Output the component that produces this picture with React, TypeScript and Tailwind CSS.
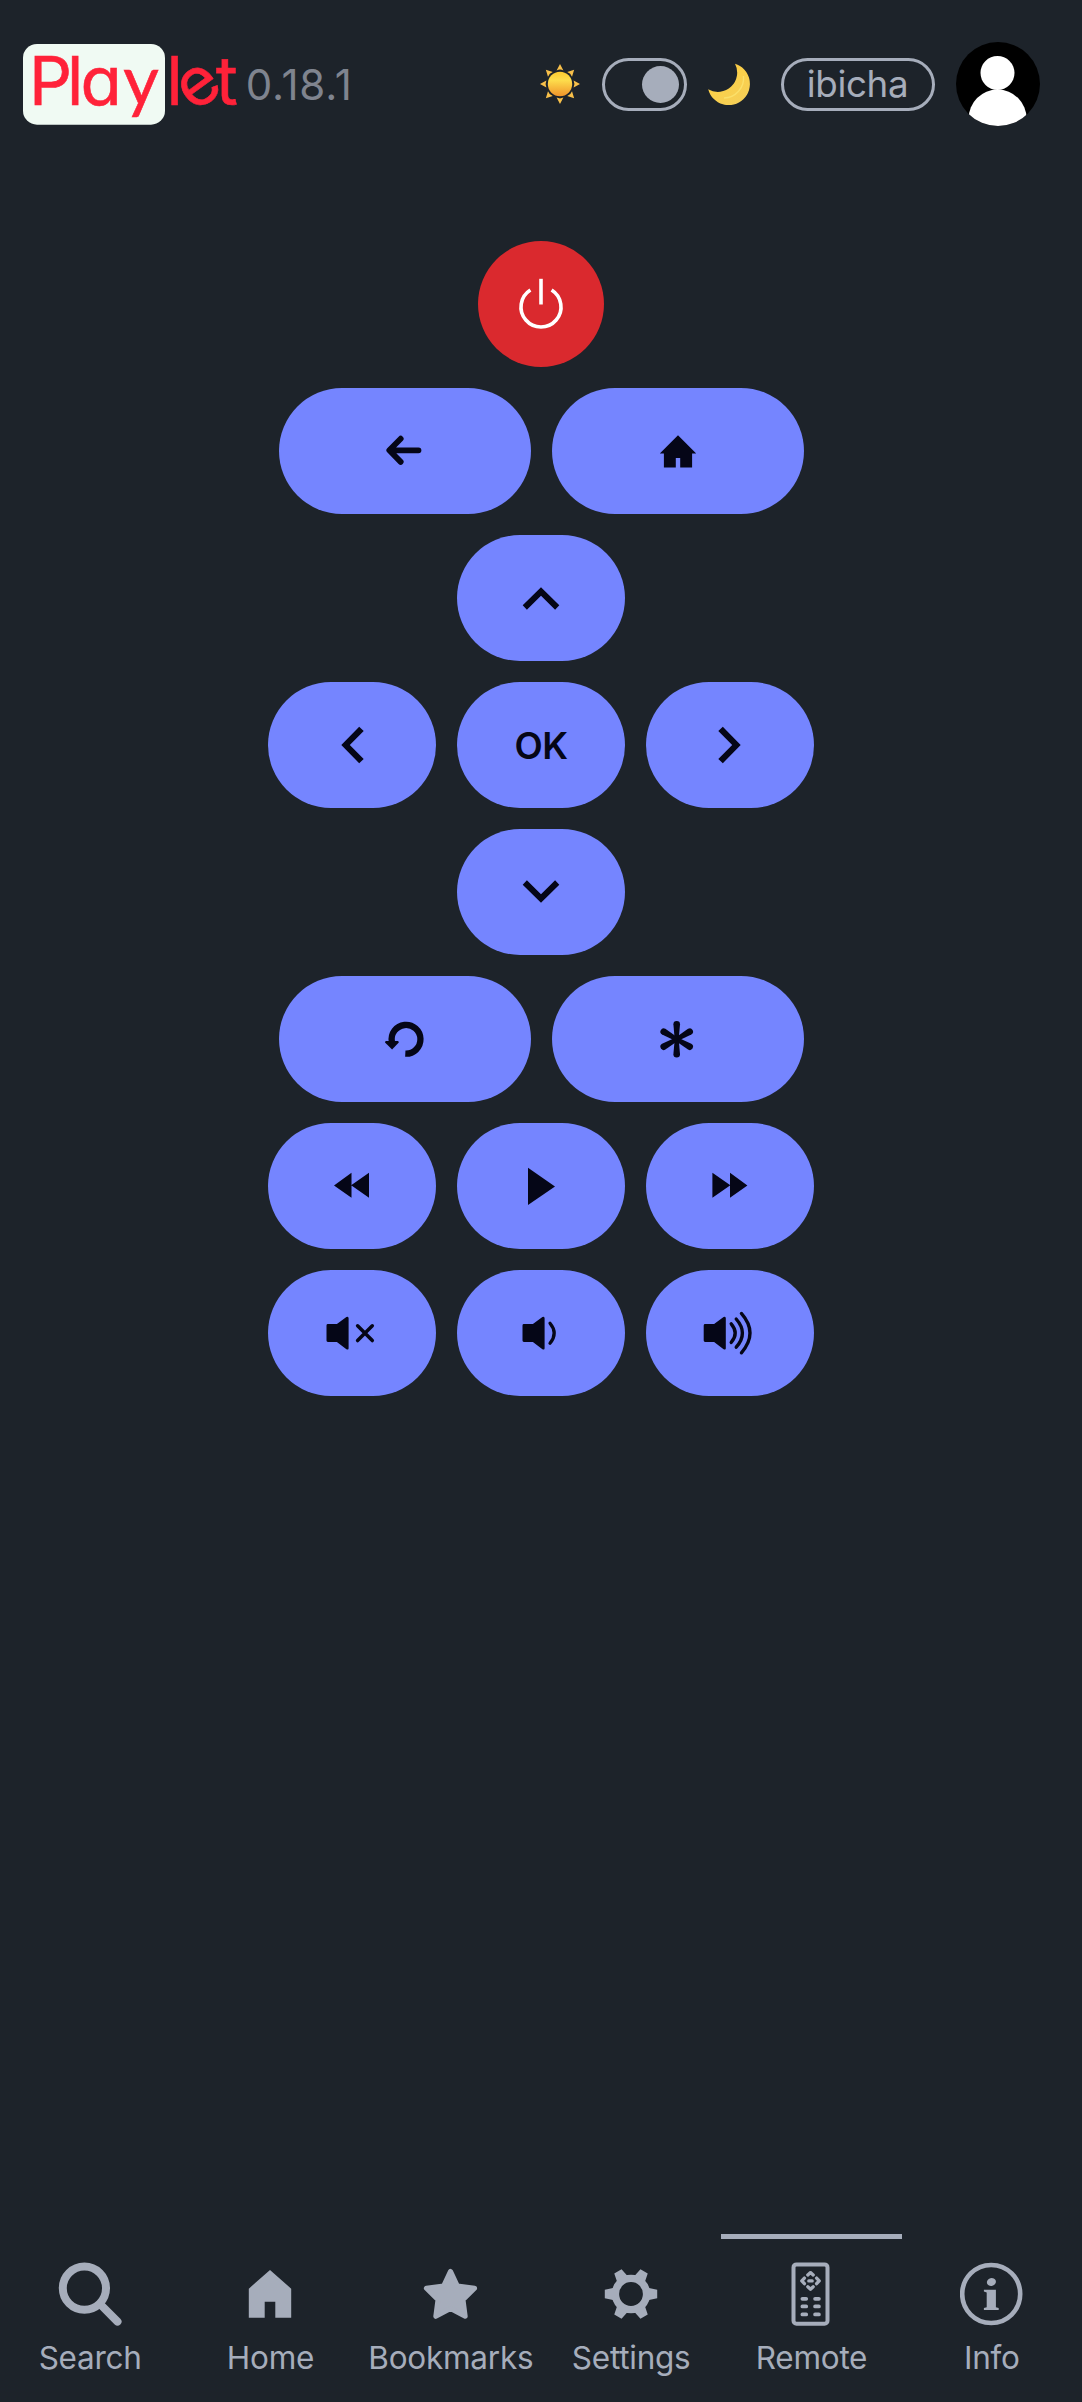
import type { ReactNode } from "react";

const SPEAKER = "M-18.5 -7.6Q-18.5 -9 -17.1 -9H-8.1L1.4 -16Q3.6 -17 3.6 -14.8V15.2Q3.6 17.4 1.4 16.2L-8.1 9H-17.1Q-18.5 9 -18.5 7.6Z";
const CHEVRON = "M-18.3 7.2L0 -10.7L18.3 7.2L14.1 11.7L0 -2.2L-14.1 11.7Z";

function Icon({ children }: { children: ReactNode }) {
  return (
    <svg className="h-16 w-16 shrink-0" viewBox="-32 -32 64 64" fill="currentColor">
      {children}
    </svg>
  );
}

function Key({ wide, label, children }: { wide?: boolean; label: string; children: ReactNode }) {
  return (
    <button
      aria-label={label}
      className={`flex h-[126px] items-center justify-center rounded-full bg-[#7585ff] text-[36.75px] font-semibold text-[#050617] ${wide ? "w-[252px]" : "w-[168px]"}`}
    >
      {children}
    </button>
  );
}

function Row({ children }: { children: ReactNode }) {
  return <div className="flex justify-center gap-[21px]">{children}</div>;
}

function Chevron({ angle }: { angle: number }) {
  return (
    <Icon>
      <path d={CHEVRON} transform={`rotate(${angle})`} />
    </Icon>
  );
}

function Logo() {
  return (
    <svg className="h-[120px] w-[220px] shrink-0" viewBox="22.7 24 220 120">
      <rect x="22.7" y="44" width="142" height="80.7" rx="14" fill="#f0faf3" />
      <g
        fill="#ff2239"
        stroke="#ff2239"
        strokeWidth=".6"
        fontFamily="Inter, sans-serif"
        fontSize="67.4"
        style={{ fontFeatureSettings: '"cv11"' }}
      >
        <text x="28.6 66.8 80.3 123" y="105">
          Pla
          <tspan fontFamily="Lato, sans-serif" fontSize="69">y</tspan>
        </text>
        <text x="166.3 193.4 215.5" y="105 113 105" rotate="0 -36 0">let</text>
      </g>
    </svg>
  );
}

function Sun() {
  return (
    <svg className="h-[42px] w-[42px] shrink-0" viewBox="-21 -21 42 42">
      <defs>
        <linearGradient id="sun" x1="0" y1="0" x2="0" y2="1">
          <stop offset="0" stopColor="#fbc92f" />
          <stop offset=".35" stopColor="#fddc4c" />
          <stop offset="1" stopColor="#f0942a" />
        </linearGradient>
      </defs>
      {[0, 45, 90, 135, 180, 225, 270, 315].map((a) => (
        <path key={a} d="M-3.4 -13.6L0 -20L3.4 -13.6Q0 -15.2 -3.4 -13.6Z" fill="#f8c04a" transform={`rotate(${a})`} />
      ))}
      <circle r="12.2" fill="url(#sun)" />
    </svg>
  );
}

function Moon() {
  return (
    <svg className="h-[42px] w-[42px] shrink-0" viewBox="708 63 42 42">
      <defs>
        <linearGradient id="moon" x1="0" y1="0" x2=".7" y2="1">
          <stop offset="0" stopColor="#f3bd3c" />
          <stop offset=".5" stopColor="#fbd04a" />
          <stop offset="1" stopColor="#f5cf57" />
        </linearGradient>
      </defs>
      <path d="M735 63.7A21.2 21.2 0 1 1 708.2 89.3A19.3 19.3 0 0 0 735 63.7Z" fill="url(#moon)" />
      <path d="M743.5 76A20 20 0 0 1 724 98" fill="none" stroke="#fbe06a" strokeWidth="1.4" />
    </svg>
  );
}

function Avatar() {
  return (
    <svg className="h-[84px] w-[84px] shrink-0" viewBox="-42 -42 84 84">
      <clipPath id="face">
        <circle r="42" />
      </clipPath>
      <circle r="42" />
      <g fill="#fff" clipPath="url(#face)">
        <circle cx="-.5" cy="-11" r="17" />
        <circle cx="-.4" cy="34.5" r="29" />
      </g>
    </svg>
  );
}

const NAV: { label: string; active?: boolean; icon: ReactNode }[] = [
  {
    label: "Search",
    icon: (
      <g fill="none" stroke="currentColor" strokeWidth="8" strokeLinecap="round">
        <circle cx="-5.6" cy="-5.8" r="21.6" />
        <path d="M11 11L27.5 27.6" />
      </g>
    ),
  },
  { label: "Home", icon: <path d="M0 -24L21.2 -5.3V23.8H5.3V7.8H-5.3V23.8H-21.2V-5.3Z" /> },
  {
    label: "Bookmarks",
    icon: (
      <path
        d="M-.5 -22.6L6.4 -8L23.6 -5.7L12 5.6L14.2 22.3L-.5 14.6L-15.2 22.3L-13 5.6L-24.6 -5.7L-7.4 -8Z"
        stroke="currentColor"
        strokeWidth="5"
        strokeLinejoin="round"
      />
    ),
  },
  {
    label: "Settings",
    icon: (
      <>
        <circle r="15.6" fill="none" stroke="currentColor" strokeWidth="7.4" />
        {[0, 60, 120, 180, 240, 300].map((a) => (
          <path key={a} d="M14 7.2L18 5.9L26.2 4.2V-4.2L18 -5.9L14 -7.2Z" transform={`rotate(${a})`} />
        ))}
      </>
    ),
  },
  {
    label: "Remote",
    active: true,
    icon: (
      <g fill="none" stroke="currentColor" strokeWidth="3.6" strokeLinecap="round" strokeLinejoin="round">
        <rect x="-17.5" y="-29.6" width="34" height="59.3" rx="3" strokeWidth="4" />
        <path
          d="M-3.2 -19L-.5 -21.4L2.2 -19M-3.2 -7.2L-.5 -4.8L2.2 -7.2M-6.6 -15.9L-9.2 -13.1L-6.6 -10.3M5.6 -15.9L8.2 -13.1L5.6 -10.3M-2.2 -13.1H1.2"
          strokeWidth="3.3"
        />
        <path
          d="M-8.6 4.8H-4.8M4.1 4.8H7.9M-8.6 12.4H-4.8M4.1 12.4H7.9M-8.6 20.4H-4.8M4.1 20.4H7.9"
          strokeWidth="3.8"
        />
      </g>
    ),
  },
  {
    label: "Info",
    icon: (
      <>
        <circle cx="-.8" r="29" fill="none" stroke="currentColor" strokeWidth="4.6" />
        <ellipse cx="-.6" cy="-12" rx="4.6" ry="3.9" transform="rotate(-15 -.6 -12)" />
        <path d="M-8.1 -4.3H3.9V13.2L6.7 14V16H-8.1V14L-5.3 13.2V-1.6L-8.1 -2.4Z" />
      </>
    ),
  },
];

export default function App() {
  return (
    <div className="flex h-[2402px] w-[1082px] flex-col bg-[#1d232a] font-['Inter',sans-serif] text-[#a6adbb]">
      <header className="flex h-[168px] items-center pr-[42.5px] pl-[22.7px]">
        <Logo />
        <span className="ml-[3px] pt-0.5 text-[42px] leading-none tracking-[0.9px] text-[#7f848f]">0.18.1</span>
        <div className="ml-auto flex items-center gap-[21px]">
          <Sun />
          <div className="flex h-[53px] w-[84.5px] items-center justify-end rounded-full border-[3px] border-current pr-[5px]">
            <div className="h-[37px] w-[37px] rounded-full bg-current" />
          </div>
          <Moon />
          <div className="ml-[10px] flex h-[53px] w-[154px] items-center justify-center rounded-full border-[3px] border-current text-[36.75px] leading-none tracking-[-0.4px]">
            ibicha
          </div>
          <Avatar />
        </div>
      </header>

      <main className="flex flex-1 flex-col gap-[21px] pt-[73.25px]">
        <Row>
          <button
            aria-label="Power"
            className="flex h-[126px] w-[126px] items-center justify-center rounded-full bg-[#da292e] text-white"
          >
            <Icon>
              <g fill="none" stroke="currentColor" strokeWidth="3.6">
                <path d="M-10.6 -14A20 20 0 1 0 10.6 -14" />
                <path d="M0 -25.2V.5" />
              </g>
            </Icon>
          </button>
        </Row>
        <Row>
          <Key wide label="Back">
            <Icon>
              <path
                d="M13.5 -.7H-15M-4.3 -12.3L-15.7 -.7L-4.3 10.9"
                fill="none"
                stroke="currentColor"
                strokeWidth="5.8"
                strokeLinecap="round"
                strokeLinejoin="round"
              />
            </Icon>
          </Key>
          <Key wide label="Home">
            <Icon>
              <path d="M0 -15.7L18.2 2.6H14.1V16.4H2.2V7H-2.2V16.4H-14.1V2.6H-18.2Z" />
            </Icon>
          </Key>
        </Row>
        <Row>
          <Key label="Up"><Chevron angle={0} /></Key>
        </Row>
        <Row>
          <Key label="Left"><Chevron angle={-90} /></Key>
          <Key label="OK"><span className="tracking-[-0.6px]">OK</span></Key>
          <Key label="Right"><Chevron angle={90} /></Key>
        </Row>
        <Row>
          <Key label="Down"><Chevron angle={180} /></Key>
        </Row>
        <Row>
          <Key wide label="Replay">
            <Icon>
              <path d="M.3 14.7A14.4 14.4 0 1 0 -13.1 3" fill="none" stroke="currentColor" strokeWidth="6.3" />
              <path d="M-19.4 1.9H-6.8L-6.2 3.4L-12.9 10.4L-20 3.4Z" />
            </Icon>
          </Key>
          <Key wide label="Options">
            <Icon>
              {[0, 60, 120, 180, 240, 300].map((a) => (
                <path
                  key={a}
                  d="M-2 0L-3.3 -15A3.3 3.3 0 0 1 3.3 -15L2 0Z"
                  transform={`translate(-1.3 .2) rotate(${a})`}
                />
              ))}
            </Icon>
          </Key>
        </Row>
        <Row>
          <Key label="Rewind">
            <Icon>
              <path d="M-18 -.6L-.5 -13.2V-1L17 -13.2V11.8L-.5 -.4V11.8Z" />
            </Icon>
          </Key>
          <Key label="Play">
            <Icon>
              <path d="M-13 -18.2L14 .4L-13 19Z" />
            </Icon>
          </Key>
          <Key label="Fast forward">
            <Icon>
              <path d="M17.4 -.6L0 -13.2V-1L-17.6 -13.2V11.8L0 -.4V11.8Z" />
            </Icon>
          </Key>
        </Row>
        <Row>
          <Key label="Mute">
            <Icon>
              <path d={SPEAKER} transform="translate(-7)" />
              <path d="M5.6 -7.2L20.3 7.6M20.3 -7.2L5.6 7.6" stroke="currentColor" strokeWidth="3.5" strokeLinecap="round" />
            </Icon>
          </Key>
          <Key label="Volume down">
            <Icon>
              <path d={SPEAKER} />
              <path d="M9 -9.8Q17.4 .2 9 10.2" fill="none" stroke="currentColor" strokeWidth="3.2" strokeLinecap="round" />
            </Icon>
          </Key>
          <Key label="Volume up">
            <Icon>
              <path d={SPEAKER} transform="translate(-7.8)" />
              <g fill="none" stroke="currentColor" strokeWidth="3.3" strokeLinecap="round">
                <path d="M1.2 -9.2Q9.2 .1 1.2 9.4" />
                <path d="M6.2 -14Q18.6 .1 6.2 14.2" />
                <path d="M11.4 -19.6Q28.6 .1 11.4 19.8" />
              </g>
            </Icon>
          </Key>
        </Row>
      </main>

      <nav className="grid h-[168px] grid-cols-6">
        {NAV.map(({ label, active, icon }) => (
          <a
            key={label}
            className={`flex flex-col items-center border-t-[5.25px] pt-[23px] ${active ? "border-current" : "border-transparent"}`}
          >
            <Icon>{icon}</Icon>
            <span className="mt-[11px] text-[31.5px] leading-[42px] tracking-[-0.25px]">{label}</span>
          </a>
        ))}
      </nav>
    </div>
  );
}
